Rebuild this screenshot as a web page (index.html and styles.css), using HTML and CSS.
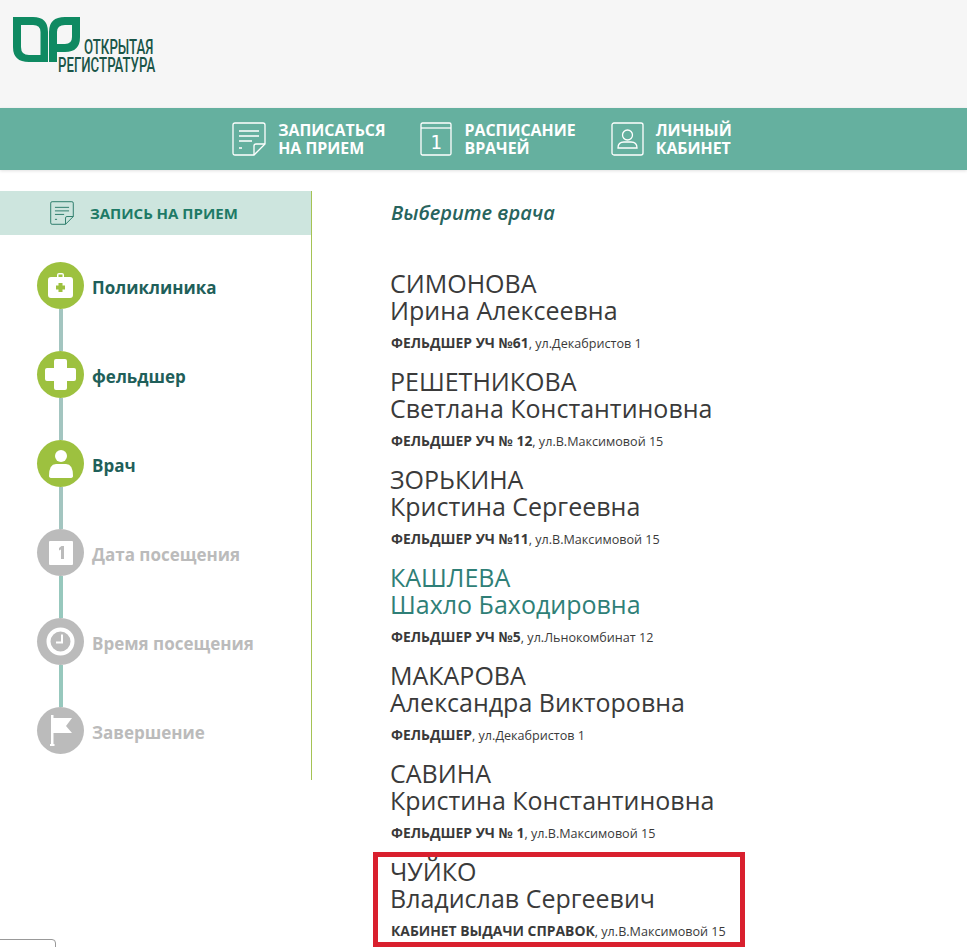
FILE: index.html
```html
<!DOCTYPE html>
<html lang="ru">
<head>
<meta charset="utf-8">
<title>Открытая регистратура</title>
<link rel="stylesheet" href="styles.css">
</head>
<body>
<div class="page">
  <header class="top">
    <div class="logo">
      <svg class="logo-mark" width="67" height="46" viewBox="0 0 67 46">
        <path fill="#0f8a62" fill-rule="evenodd" d="M0 0H20Q35 0 35 15V45H16Q0 45 0 30ZM8 8V30Q8 38 16 38H27.500V15Q27.500 8 20 8Z"/>
        <path fill="#0f8a62" fill-rule="evenodd" d="M52 0H67V20Q67 35 52 35H44V45H36V15Q36 0 52 0ZM44 15V27H52Q59 27 59 20V8H52Q44 8 44 15Z"/>
      </svg>
      <span class="logo-line logo-line-a">ОТКРЫТАЯ</span>
      <span class="logo-line logo-line-b">РЕГИСТРАТУРА</span>
    </div>
  </header>

  <nav class="nav">
    <a class="nav-item">
      <svg width="34" height="34" viewBox="0 0 34 34" fill="none" stroke="#fff" stroke-width="1.3">
        <path d="M22 33H3Q1 33 1 31V3Q1 1 3 1H31Q33 1 33 3V22Z"/>
        <path d="M22 33V24Q22 22 24 22H33"/>
        <path d="M7 9H27M7 14H27M7 19H20M7 26H10" stroke-width="1.5"/>
      </svg>
      <span>ЗАПИСАТЬСЯ<br>НА ПРИЕМ</span>
    </a>
    <a class="nav-item">
      <svg width="32" height="34" viewBox="0 0 32 34" fill="none" stroke="#fff" stroke-width="1.3">
        <rect x="1" y="1" width="30" height="32" rx="1.5"/>
        <path d="M1 6H31"/>
        <text x="16" y="27" class="cal-digit">1</text>
      </svg>
      <span>РАСПИСАНИЕ<br>ВРАЧЕЙ</span>
    </a>
    <a class="nav-item">
      <svg width="33" height="34" viewBox="0 0 33 34" fill="none" stroke="#fff" stroke-width="1.3">
        <rect x="1" y="1" width="31" height="32" rx="2"/>
        <circle cx="16.500" cy="13" r="5"/>
        <path d="M7 26Q7 20 13 20H20Q26 20 26 26Z"/>
      </svg>
      <span>ЛИЧНЫЙ<br>КАБИНЕТ</span>
    </a>
  </nav>

  <main class="main">
    <aside class="side">
      <div class="side-head">
        <svg width="24" height="24" viewBox="0 0 34 34" fill="none" stroke="#2e7d6c" stroke-width="1.4">
          <path d="M22 33H3Q1 33 1 31V3Q1 1 3 1H31Q33 1 33 3V22Z"/>
          <path d="M22 33V24Q22 22 24 22H33"/>
          <path d="M7 9H27M7 14H27M7 19H20M7 26H10"/>
        </svg>
        <span>ЗАПИСЬ НА ПРИЕМ</span>
      </div>
      <ol class="steps">
        <li class="step on">
          <span class="dot">
            <svg width="27" height="27" viewBox="0 0 27 27"><path fill="#fff" fill-rule="evenodd" d="M10 5V3Q10 1 12 1H15Q17 1 17 3V5H23Q26 5 26 8V23Q26 26 23 26H4Q1 26 1 23V8Q1 5 4 5ZM11.500 5H15.500V2.500H11.500Z"/><path fill="#9dc13f" d="M11.500 11H15.500V13.500H18V17.500H15.500V20H11.500V17.500H9V13.500H11.500Z"/></svg>
          </span>
          <span class="label">Поликлиника</span>
        </li>
        <li class="step on">
          <span class="dot">
            <svg width="37" height="37" viewBox="0 0 37 37"><path fill="#fff" d="M14 3H23Q25 3 25 5V12H32Q34 12 34 14V23Q34 25 32 25H25V32Q25 34 23 34H14Q12 34 12 32V25H5Q3 25 3 23V14Q3 12 5 12H12V5Q12 3 14 3Z"/></svg>
          </span>
          <span class="label">фельдшер</span>
        </li>
        <li class="step on">
          <span class="dot">
            <svg width="26" height="30" viewBox="0 0 26 30"><circle fill="#fff" cx="13" cy="7" r="6"/><path fill="#fff" d="M1 27Q1 15 8 15H18Q25 15 25 27Q25 29 22 29H4Q1 29 1 27Z"/></svg>
          </span>
          <span class="label">Врач</span>
        </li>
        <li class="step">
          <span class="dot">
            <svg width="24" height="24" viewBox="0 0 24 24"><path fill="#fff" fill-rule="evenodd" d="M1 0H23Q24 0 24 1V23Q24 24 23 24H1Q0 24 0 23V1Q0 0 1 0ZM10 7V9.500L12 8.500V18H15V5H12.500Z"/></svg>
          </span>
          <span class="label">Дата посещения</span>
        </li>
        <li class="step">
          <span class="dot">
            <svg width="29" height="29" viewBox="0 0 29 29"><circle cx="14.500" cy="14.500" r="12" fill="none" stroke="#fff" stroke-width="4"/><path d="M16 7.500V15.500H10" fill="none" stroke="#fff" stroke-width="2"/></svg>
          </span>
          <span class="label">Время посещения</span>
        </li>
        <li class="step">
          <span class="dot">
            <svg width="26" height="32" viewBox="0 0 26 32"><path fill="#fff" d="M3 0H5.500V3H24L18 11L24 18H5.500V29H6.500V31H2V29H3Z"/></svg>
          </span>
          <span class="label">Завершение</span>
        </li>
      </ol>
    </aside>

    <section class="content">
      <h1 class="title">Выберите врача</h1>
      <ul class="doctors">
        <li class="doctor">
          <div class="name">СИМОНОВА<br>Ирина Алексеевна</div>
          <div class="meta"><b>ФЕЛЬДШЕР УЧ №61</b>, ул.Декабристов 1</div>
        </li>
        <li class="doctor">
          <div class="name">РЕШЕТНИКОВА<br>Светлана Константиновна</div>
          <div class="meta"><b>ФЕЛЬДШЕР УЧ № 12</b>, ул.В.Максимовой 15</div>
        </li>
        <li class="doctor">
          <div class="name">ЗОРЬКИНА<br>Кристина Сергеевна</div>
          <div class="meta"><b>ФЕЛЬДШЕР УЧ №11</b>, ул.В.Максимовой 15</div>
        </li>
        <li class="doctor hover">
          <div class="name">КАШЛЕВА<br>Шахло Баходировна</div>
          <div class="meta"><b>ФЕЛЬДШЕР УЧ №5</b>, ул.Льнокомбинат 12</div>
        </li>
        <li class="doctor">
          <div class="name">МАКАРОВА<br>Александра Викторовна</div>
          <div class="meta"><b>ФЕЛЬДШЕР</b>, ул.Декабристов 1</div>
        </li>
        <li class="doctor">
          <div class="name">САВИНА<br>Кристина Константиновна</div>
          <div class="meta"><b>ФЕЛЬДШЕР УЧ № 1</b>, ул.В.Максимовой 15</div>
        </li>
        <li class="doctor">
          <div class="name">ЧУЙКО<br>Владислав Сергеевич</div>
          <div class="meta"><b>КАБИНЕТ ВЫДАЧИ СПРАВОК</b>, ул.В.Максимовой 15</div>
        </li>
      </ul>
      <div class="highlight"></div>
    </section>
  </main>
  <div class="corner"></div>
</div>
</body>
</html>
```
FILE: styles.css
```css
* { box-sizing: border-box; }
html, body { margin: 0; padding: 0; background: #fff; }
body { font-family: "Open Sans", "Noto Sans", sans-serif; color: #3a3a3a; }
.page { position: relative; height: 947px; overflow: hidden; }

.top { height: 108px; background: #f6f6f6; padding: 17px 0 0 13px; }
.logo { position: relative; width: 150px; height: 60px; }
.logo-mark { display: block; }
.logo-line { position: absolute; font-family: "Roboto", sans-serif; font-weight: 500; color: #1a5548; font-size: 21px; line-height: 18px; white-space: nowrap; transform-origin: 0 0; transform: scaleX(.63); }
.logo-line-a { left: 71px; top: 21px; }
.logo-line-b { left: 45px; top: 39px; }

.nav { height: 62px; background: #65b09f; display: flex; justify-content: center; gap: 35px; padding-right: 3px; box-shadow: 0 1px 3px rgba(0,0,0,.12); }
.nav-item { display: flex; align-items: center; gap: 12px; color: #fff; font-weight: 700; font-size: 15.900px; line-height: 18px; }
.cal-digit { font-family: "DejaVu Sans Mono", monospace; font-size: 19px; fill: #fff; stroke: none; text-anchor: middle; font-weight: 400; }

.main { display: flex; padding-top: 21px; }
.side { width: 312px; height: 589px; border-right: 1px solid #a5c354; flex: none; }
.side-head { height: 44px; background: #cde5de; display: flex; align-items: center; gap: 16px; color: #1e7a66; font-weight: 700; font-size: 15px; padding-left: 50px; }
.steps { list-style: none; margin: 27px 0 0; padding: 0 0 0 37px; }
.step { position: relative; display: flex; align-items: center; gap: 8px; height: 47px; margin-bottom: 42px; font-weight: 700; font-size: 17px; color: #bbb; }
.step::after { content: ""; position: absolute; left: 22px; top: 47px; width: 4px; height: 42px; background: #97c8bd; }
.step:last-child::after { display: none; }
.step.on { color: #1f5f5a; }
.step.on::after { background: #a3c5c0; }
.label { position: relative; top: 2px; }
.dot { width: 47px; height: 47px; border-radius: 50%; background: #bbb; display: flex; align-items: center; justify-content: center; flex: none; }
.on .dot { background: #9dc13f; }

.content { position: relative; padding-left: 78px; flex: 1; }
.title { margin: 0 0 0 1px; font-size: 20px; font-style: italic; font-weight: 600; color: #27645d; line-height: 44px; }
.doctors { list-style: none; margin: 35px 0 0; padding: 0; }
.doctor { height: 98px; }
.name { font-size: 25px; line-height: 27px; color: #3a3a3a; }
.hover .name { color: #2f7f77; }
.meta { font-size: 12.600px; line-height: 18px; margin: 10px 0 0 1px; color: #3a3a3a; }
.meta b { font-size: 13.900px; font-weight: 700; }
.highlight { position: absolute; left: 61px; top: 661px; width: 372px; height: 95px; border: 5px solid #d9202e; }

.corner { position: absolute; left: -2px; bottom: -4px; width: 58px; height: 12px; border: 1px solid #999; border-radius: 0 4px 0 0; background: #fff; }
```
